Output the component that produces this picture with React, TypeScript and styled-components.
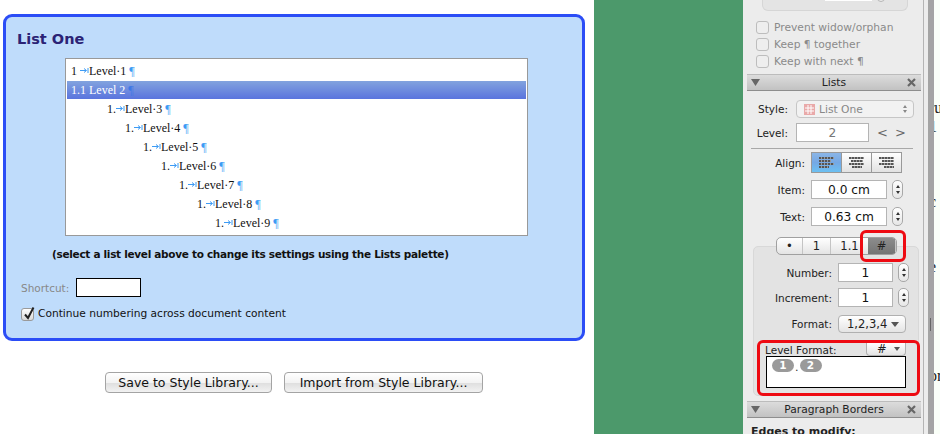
import React from 'react'
import styled, { createGlobalStyle } from 'styled-components'

const Global = createGlobalStyle`
  html, body {
    margin: 0;
    padding: 0;
    width: 940px;
    height: 434px;
    overflow: hidden;
    background: #fff;
  }
  body {
    font-family: "DejaVu Sans", sans-serif;
    font-size: 11px;
    color: #111;
  }
`

const Page = styled.div`
  display: flex;
  width: 940px;
  height: 434px;
  overflow: hidden;
`

/* left: style editor */

const Editor = styled.div`
  width: 594px;
  flex: none;
  padding: 14px 9px 0 3px;
  box-sizing: border-box;
`

const ListPanel = styled.section`
  height: 327px;
  box-sizing: border-box;
  border: 3px solid #2b4df6;
  border-radius: 9px;
  background: #bfdcfb;
  padding: 12px 0 0 11px;
`

const PanelTitle = styled.h2`
  margin: 0;
  font-size: 14.5px;
  line-height: 20px;
  font-weight: 700;
  color: #2b2375;
`

const LevelBox = styled.div`
  width: 463px;
  height: 178px;
  box-sizing: border-box;
  margin: 9px 0 0 48px;
  padding: 3px 1px 0 1px;
  border: 1px solid #999;
  background: #fff;
  font-family: "Liberation Serif", serif;
  font-size: 12px;
`

const LevelRow = styled.div<{ $depth: number; $selected?: boolean }>`
  display: flex;
  align-items: center;
  box-sizing: border-box;
  height: ${(p) => (p.$selected ? 18 : 19)}px;
  margin-bottom: ${(p) => (p.$selected ? 1 : 0)}px;
  line-height: 18px;
  white-space: pre;
  padding-left: ${(p) => 4 + p.$depth * 18}px;
  padding-bottom: ${(p) => (p.$selected ? 0 : 2)}px;
  color: ${(p) => (p.$selected ? '#fff' : '#111')};
  background: ${(p) => (p.$selected ? 'linear-gradient(#82a3de, #5a74de)' : 'none')};
`

const LevelNumber = styled.span`
  display: inline-block;
  min-width: 9px;
`

const TabArrow = styled.svg`
  flex: none;
`

const Mark = styled.span<{ $selected?: boolean }>`
  color: ${(p) => (p.$selected ? '#3f78e6' : '#3d9bf4')};
`

const Hint = styled.p`
  margin: 11px 0 0 35px;
  font-size: 10.5px;
  letter-spacing: -0.3px;
  line-height: 14px;
  font-weight: 700;
  color: #111;
`

const ShortcutRow = styled.div`
  display: flex;
  align-items: center;
  gap: 7px;
  margin: 17px 0 0 4px;
  font-size: 10.5px;
  color: #888;
`

const ShortcutField = styled.div`
  width: 65px;
  height: 19px;
  box-sizing: border-box;
  border: 1px solid #000;
  background: #fff;
`

const ContinueRow = styled.label`
  display: flex;
  align-items: center;
  gap: 4px;
  margin: 9px 0 0 4px;
  font-size: 10.65px;
  line-height: 16px;
  color: #111;
`

const CheckBox = styled.span<{ $muted?: boolean }>`
  position: relative;
  display: block;
  flex: none;
  width: 13px;
  height: 13px;
  box-sizing: border-box;
  border: 1px solid ${(p) => (p.$muted ? '#bdbdbd' : '#9a9a9a')};
  border-radius: 3px;
  background: ${(p) => (p.$muted ? '#eeeeee' : 'linear-gradient(#fff, #d8d8d8)')};
`

const CheckMark = styled.svg`
  position: absolute;
  left: 0;
  top: -4px;
`

const ButtonRow = styled.div`
  display: flex;
  gap: 12px;
  margin: 31px 0 0 102px;
`

const PushButton = styled.div<{ $w: number }>`
  width: ${(p) => p.$w}px;
  height: 21px;
  box-sizing: border-box;
  border: 1px solid #a4a4a4;
  border-radius: 4px;
  background: linear-gradient(#fff 0%, #f3f3f3 50%, #dedede 51%, #f2f2f2 100%);
  font-size: 12.5px;
  line-height: 20px;
  text-align: center;
  color: #111;
`

const Backdrop = styled.div`
  width: 149px;
  flex: none;
  background: #4c996b;
`

/* right: palette window */

const Palette = styled.aside`
  position: relative;
  width: 178px;
  flex: none;
  height: 434px;
  box-sizing: border-box;
  padding-left: 3px;
  background: #ececec;
  color: #333;
`

const TopWell = styled.div`
  position: relative;
  height: 11px;
  margin: 0 13px 0 16px;
  box-sizing: border-box;
  border: 1px solid #d6d6d6;
  border-top: 0;
  border-radius: 0 0 6px 6px;
  background: #e4e4e4;
`

const WellField = styled.span`
  position: absolute;
  left: 62px;
  top: 0;
  width: 47px;
  height: 1px;
  background: #fff;
`

const WellKnob = styled.span`
  position: absolute;
  left: 114px;
  top: -6px;
  width: 8px;
  height: 8px;
  box-sizing: border-box;
  border: 1px solid #b4b4b4;
  border-radius: 50%;
  background: #eee;
`

const OptionList = styled.div`
  display: flex;
  flex-direction: column;
  gap: 4px;
  margin: 10px 0 0 10px;
`

const OptionRow = styled.div`
  display: flex;
  align-items: center;
  gap: 5px;
  height: 13px;
  font-size: 10.7px;
  color: #8a8a8a;
`

const SectionBar = styled.div<{ $top: number }>`
  display: flex;
  align-items: center;
  justify-content: space-between;
  height: 17px;
  box-sizing: border-box;
  margin-top: ${(p) => p.$top}px;
  margin-left: 1px;
  padding: 0 5px 0 3px;
  border-top: 1px solid #bcbcbc;
  border-bottom: 1px solid #8e8e8e;
  background: linear-gradient(#dcdcdc, #c2c2c2);
  font-size: 10.7px;
  color: #222;
`

const SectionGlyph = styled.svg`
  flex: none;
`

const SectionBody = styled.div`
  padding: 9px 0 0 0;
`

const FormRow = styled.div<{ $label: number; $top?: number; $pad?: number }>`
  display: flex;
  align-items: center;
  margin-top: ${(p) => p.$top ?? 0}px;
  & > label {
    flex: none;
    width: ${(p) => p.$label}px;
    box-sizing: border-box;
    padding-right: ${(p) => p.$pad ?? 6}px;
    text-align: right;
    font-size: 10.5px;
    color: #222;
  }
`

const FormField = styled.div<{ $w: number; $muted?: boolean }>`
  width: ${(p) => p.$w}px;
  height: 19px;
  flex: none;
  box-sizing: border-box;
  border: 1px solid #b4b4b4;
  background: #fff;
  line-height: 18px;
  text-align: center;
  font-size: 12.2px;
  color: ${(p) => (p.$muted ? '#777' : '#111')};
`

const StyleSelect = styled.div`
  display: flex;
  align-items: center;
  gap: 4px;
  width: 118px;
  height: 18px;
  flex: none;
  box-sizing: border-box;
  padding: 0 6px 0 7px;
  border: 1px solid #c6c6c6;
  border-radius: 4px;
  background: #f2f2f2;
  color: #888;
  font-size: 10.7px;
`

const SelectArrows = styled.span`
  display: flex;
  flex-direction: column;
  gap: 2px;
  margin-left: auto;
`

const Swatch = styled.svg`
  display: block;
  flex: none;
`

const Chevrons = styled.span`
  margin-left: 8px;
  font-size: 13px;
  letter-spacing: 7px;
  color: #666;
`

const Rule = styled.div`
  height: 1px;
  margin: 6px 8px 0 5px;
  background: #a8a8a8;
`

const AlignGroup = styled.div`
  display: flex;
  width: 91px;
  height: 21px;
  flex: none;
  box-sizing: border-box;
  border: 1px solid #999;
`

const AlignCell = styled.div<{ $on?: boolean; $align: string }>`
  flex: 1;
  display: flex;
  flex-direction: column;
  justify-content: center;
  align-items: ${(p) => p.$align};
  gap: 1px;
  padding: 0 7px;
  border-right: 1px solid #999;
  background: ${(p) => (p.$on ? 'linear-gradient(#8bb5e6 0%, #75a8e4 50%, #6cc0f2 100%)' : 'linear-gradient(#fff, #e2e2e2)')};
  &:last-child {
    border-right: 0;
  }
`

const AlignLine = styled.span<{ $w: number }>`
  display: block;
  width: ${(p) => p.$w}px;
  height: 2px;
  background: repeating-linear-gradient(90deg, #555 0 2px, #999 2px 3px);
`

const Stepper = styled.div`
  display: flex;
  flex-direction: column;
  align-items: center;
  justify-content: center;
  gap: 3px;
  width: 11px;
  height: 19px;
  flex: none;
  margin-left: 5px;
  box-sizing: border-box;
  border: 1px solid #a8a8a8;
  border-radius: 5px;
  background: linear-gradient(#fff, #e6e6e6);
`

const TinyArrow = styled.span<{ $down?: boolean; $muted?: boolean }>`
  display: block;
  width: 0;
  height: 0;
  border-left: 2px solid transparent;
  border-right: 2px solid transparent;
  ${(p) => {
    const c = p.$muted ? '#888' : '#333'
    return p.$down ? `border-top: 3px solid ${c};` : `border-bottom: 3px solid ${c};`
  }}
`

const Segments = styled.div`
  position: relative;
  z-index: 1;
  display: flex;
  width: 121px;
  height: 18px;
  box-sizing: border-box;
  margin: 11px 0 0 30px;
  border: 1px solid #a0a0a0;
  border-radius: 5px;
  background: linear-gradient(#fff, #e4e4e4);
  overflow: hidden;
`

const Segment = styled.div<{ $w?: number; $on?: boolean; $plain?: boolean }>`
  width: ${(p) => (p.$w ? `${p.$w}px` : 'auto')};
  flex: ${(p) => (p.$w ? 'none' : '1')};
  box-sizing: border-box;
  border-right: ${(p) => (p.$plain ? '0' : '1px solid #c4c4c4')};
  text-align: center;
  line-height: 16px;
  font-size: 11.5px;
  color: #222;
  ${(p) => (p.$on ? 'background: linear-gradient(#8c8c8c, #747474);' : '')}
`

const FormatWell = styled.div`
  height: 150px;
  margin: -9px 2px 0 7px;
  box-sizing: border-box;
  padding-top: 16px;
  border: 1px solid #d8d8d8;
  border-radius: 5px;
  background: #e3e3e3;
`

const ValueSelect = styled.div<{ $w: number }>`
  display: flex;
  align-items: center;
  justify-content: space-between;
  width: ${(p) => p.$w}px;
  height: 18px;
  flex: none;
  box-sizing: border-box;
  padding: 0 6px 0 8px;
  border: 1px solid #b0b0b0;
  border-radius: 4px;
  background: linear-gradient(#fff, #e4e4e4);
  color: #222;
  font-size: 11.5px;
`

const DownArrow = styled.span`
  display: block;
  flex: none;
  width: 0;
  height: 0;
  border-left: 4px solid transparent;
  border-right: 4px solid transparent;
  border-top: 5px solid #555;
`

const LevelFormatHead = styled.div`
  display: flex;
  align-items: center;
  justify-content: space-between;
  height: 13px;
  margin: 10px 12px 0 11px;
  font-size: 10.5px;
  color: #222;
`

const MiniSelect = styled(ValueSelect)`
  height: 13px;
  padding: 0 5px 0 10px;
  border-radius: 0 0 4px 4px;
  border-top: 0;
`

const SmallDown = styled(DownArrow)`
  border-left-width: 3px;
  border-right-width: 3px;
  border-top-width: 4px;
`

const FormatField = styled.div`
  display: flex;
  align-items: flex-start;
  height: 32px;
  box-sizing: border-box;
  margin: 0 12px;
  padding: 2px 0 0 5px;
  border: 1px solid #000;
  background: #fff;
  font-size: 11px;
  color: #333;
`

const Token = styled.span`
  display: block;
  width: 22px;
  height: 13px;
  border-radius: 7px;
  background: #9a9a9a;
  color: #fff;
  font-size: 10.5px;
  font-weight: 700;
  line-height: 13px;
  text-align: center;
`

const Dot = styled.span`
  line-height: 17px;
  margin: 0 1px;
`

const EdgesLabel = styled.div`
  margin: 7px 0 0 5px;
  font-size: 11px;
  font-weight: 600;
  line-height: 14px;
  color: #222;
`

const Callout = styled.div<{ $l: number; $t: number; $w: number; $h: number }>`
  position: absolute;
  z-index: 2;
  left: ${(p) => p.$l}px;
  top: ${(p) => p.$t}px;
  width: ${(p) => p.$w}px;
  height: ${(p) => p.$h}px;
  box-sizing: border-box;
  border: 3px solid #ee0a12;
  border-radius: 6px;
`

const PaletteEdge = styled.div`
  display: flex;
  width: 13px;
  flex: none;
  background: #ececec;
`

const EdgeLine = styled.span`
  display: block;
  width: 1px;
  margin-left: 2px;
  background: #b4b4b4;
`

const EdgeBar = styled.span`
  position: relative;
  display: block;
  width: 6px;
  margin-left: 4px;
  background: #a4a4a4;
`

const EdgeGrip = styled.span`
  position: absolute;
  left: 2px;
  top: 318px;
  width: 1px;
  height: 13px;
  background: #666;
`

/* clipped document text behind the palette */

const DocStrip = styled.div`
  flex: 1;
  overflow: hidden;
  background: #fafff8;
  font-family: "Liberation Serif", serif;
  font-size: 16px;
  color: #222;
`

const DocLine = styled.div<{ $top: number }>`
  height: 18px;
  line-height: 18px;
  margin-top: ${(p) => p.$top}px;
  margin-left: -5px;
  white-space: nowrap;
`

const levels = [
  { depth: 0, num: '1', label: 'Level·1' },
  { depth: 0, num: '1.1', label: 'Level 2', selected: true },
  { depth: 2, num: '1.', label: 'Level·3' },
  { depth: 3, num: '1.', label: 'Level·4' },
  { depth: 4, num: '1.', label: 'Level·5' },
  { depth: 5, num: '1.', label: 'Level·6' },
  { depth: 6, num: '1.', label: 'Level·7' },
  { depth: 7, num: '1.', label: 'Level·8' },
  { depth: 8, num: '1.', label: 'Level·9' },
]

const Tick = () => (
  <CheckMark width="14" height="16" viewBox="0 0 14 16">
    <path d="M3 9.5 L6 13 L11.5 2.5" fill="none" stroke="#222" strokeWidth="2" />
  </CheckMark>
)

const Step = () => (
  <Stepper>
    <TinyArrow />
    <TinyArrow $down />
  </Stepper>
)

const Bar = ({ title, top }: { title: string; top: number }) => (
  <SectionBar $top={top}>
    <SectionGlyph width="11" height="9" viewBox="0 0 11 9">
      <path d="M1 1 H10 L5.5 8 Z" fill="#666" />
    </SectionGlyph>
    {title}
    <SectionGlyph width="9" height="9" viewBox="0 0 9 9">
      <path d="M1 1 L8 8 M8 1 L1 8" stroke="#666" strokeWidth="2.2" />
    </SectionGlyph>
  </SectionBar>
)

const AlignPreview = ({ align, on }: { align: string; on?: boolean }) => (
  <AlignCell $align={align} $on={on}>
    <AlignLine $w={15} />
    <AlignLine $w={12} />
    <AlignLine $w={15} />
    <AlignLine $w={10} />
  </AlignCell>
)

export default function App() {
  return (
    <Page>
      <Global />
      <Editor>
        <ListPanel>
          <PanelTitle>List One</PanelTitle>
          <LevelBox>
            {levels.map((l) => (
              <LevelRow key={l.label} $depth={l.depth} $selected={l.selected}>
                {l.selected ? (
                  <>{l.num} </>
                ) : (
                  <>
                    <LevelNumber>{l.num}</LevelNumber>
                    <TabArrow width="9" height="7" viewBox="0 0 9 7">
                      <path d="M0 3.5 H6 M4 1.5 L6.5 3.5 L4 5.5 M8 1 V6" fill="none" stroke="#3d9bf4" strokeWidth="1" />
                    </TabArrow>
                  </>
                )}
                {l.label} <Mark $selected={l.selected}>¶</Mark>
              </LevelRow>
            ))}
          </LevelBox>
          <Hint>(select a list level above to change its settings using the Lists palette)</Hint>
          <ShortcutRow>
            Shortcut:
            <ShortcutField />
          </ShortcutRow>
          <ContinueRow>
            <CheckBox>
              <Tick />
            </CheckBox>
            Continue numbering across document content
          </ContinueRow>
        </ListPanel>
        <ButtonRow>
          <PushButton $w={167}>Save to Style Library...</PushButton>
          <PushButton $w={199}>Import from Style Library...</PushButton>
        </ButtonRow>
      </Editor>
      <Backdrop />
      <Palette>
        <TopWell>
          <WellField />
          <WellKnob />
        </TopWell>
        <OptionList>
          <OptionRow><CheckBox $muted />Prevent widow/orphan</OptionRow>
          <OptionRow><CheckBox $muted />Keep ¶ together</OptionRow>
          <OptionRow><CheckBox $muted />Keep with next ¶</OptionRow>
        </OptionList>
        <Bar title="Lists" top={6} />
        <SectionBody>
          <FormRow $label={50} $pad={8}>
            <label>Style:</label>
            <StyleSelect>
              <Swatch width="11" height="11" viewBox="0 0 11 11">
                <rect width="11" height="11" fill="#e9a9a9" />
                <path d="M4 1 V10 M7 1 V10 M1 4 H10 M1 7 H10" stroke="#fff" strokeWidth="1" />
              </Swatch>
              List One
              <SelectArrows>
                <TinyArrow $muted />
                <TinyArrow $down $muted />
              </SelectArrows>
            </StyleSelect>
          </FormRow>
          <FormRow $label={50} $pad={8} $top={5}>
            <label>Level:</label>
            <FormField $w={73} $muted>2</FormField>
            <Chevrons>&lt;&gt;</Chevrons>
          </FormRow>
          <Rule />
          <FormRow $label={65} $top={3}>
            <label>Align:</label>
            <AlignGroup>
              <AlignPreview align="flex-start" on />
              <AlignPreview align="center" />
              <AlignPreview align="flex-end" />
            </AlignGroup>
          </FormRow>
          <FormRow $label={65} $top={7}>
            <label>Item:</label>
            <FormField $w={76}>0.0 cm</FormField>
            <Step />
          </FormRow>
          <FormRow $label={65} $top={8}>
            <label>Text:</label>
            <FormField $w={76}>0.63 cm</FormField>
            <Step />
          </FormRow>
          <Segments>
            <Segment $w={26}>•</Segment>
            <Segment $w={28}>1</Segment>
            <Segment $w={37} $plain>1.1</Segment>
            <Segment $on>#</Segment>
          </Segments>
          <FormatWell>
            <FormRow $label={84}>
              <label>Number:</label>
              <FormField $w={55}>1</FormField>
              <Step />
            </FormRow>
            <FormRow $label={84} $top={6}>
              <label>Increment:</label>
              <FormField $w={55}>1</FormField>
              <Step />
            </FormRow>
            <FormRow $label={84} $top={8}>
              <label>Format:</label>
              <ValueSelect $w={68}>1,2,3,4<DownArrow /></ValueSelect>
            </FormRow>
            <LevelFormatHead>
              Level Format:
              <MiniSelect $w={40}>#<SmallDown /></MiniSelect>
            </LevelFormatHead>
            <FormatField>
              <Token>1</Token>
              <Dot>.</Dot>
              <Token>2</Token>
            </FormatField>
          </FormatWell>
        </SectionBody>
        <Bar title="Paragraph Borders" top={5} />
        <EdgesLabel>Edges to modify:</EdgesLabel>
        <Callout $l={117} $t={230} $w={46} $h={32} />
        <Callout $l={14} $t={340} $w={163} $h={56} />
      </Palette>
      <PaletteEdge>
        <EdgeLine />
        <EdgeBar>
          <EdgeGrip />
        </EdgeBar>
      </PaletteEdge>
      <DocStrip>
        <DocLine $top={99}>ru</DocLine>
        <DocLine $top={1}>1</DocLine>
        <DocLine $top={57}>c</DocLine>
        <DocLine $top={47}>e</DocLine>
        <DocLine $top={57}>'</DocLine>
        <DocLine $top={16}>or</DocLine>
      </DocStrip>
    </Page>
  )
}
